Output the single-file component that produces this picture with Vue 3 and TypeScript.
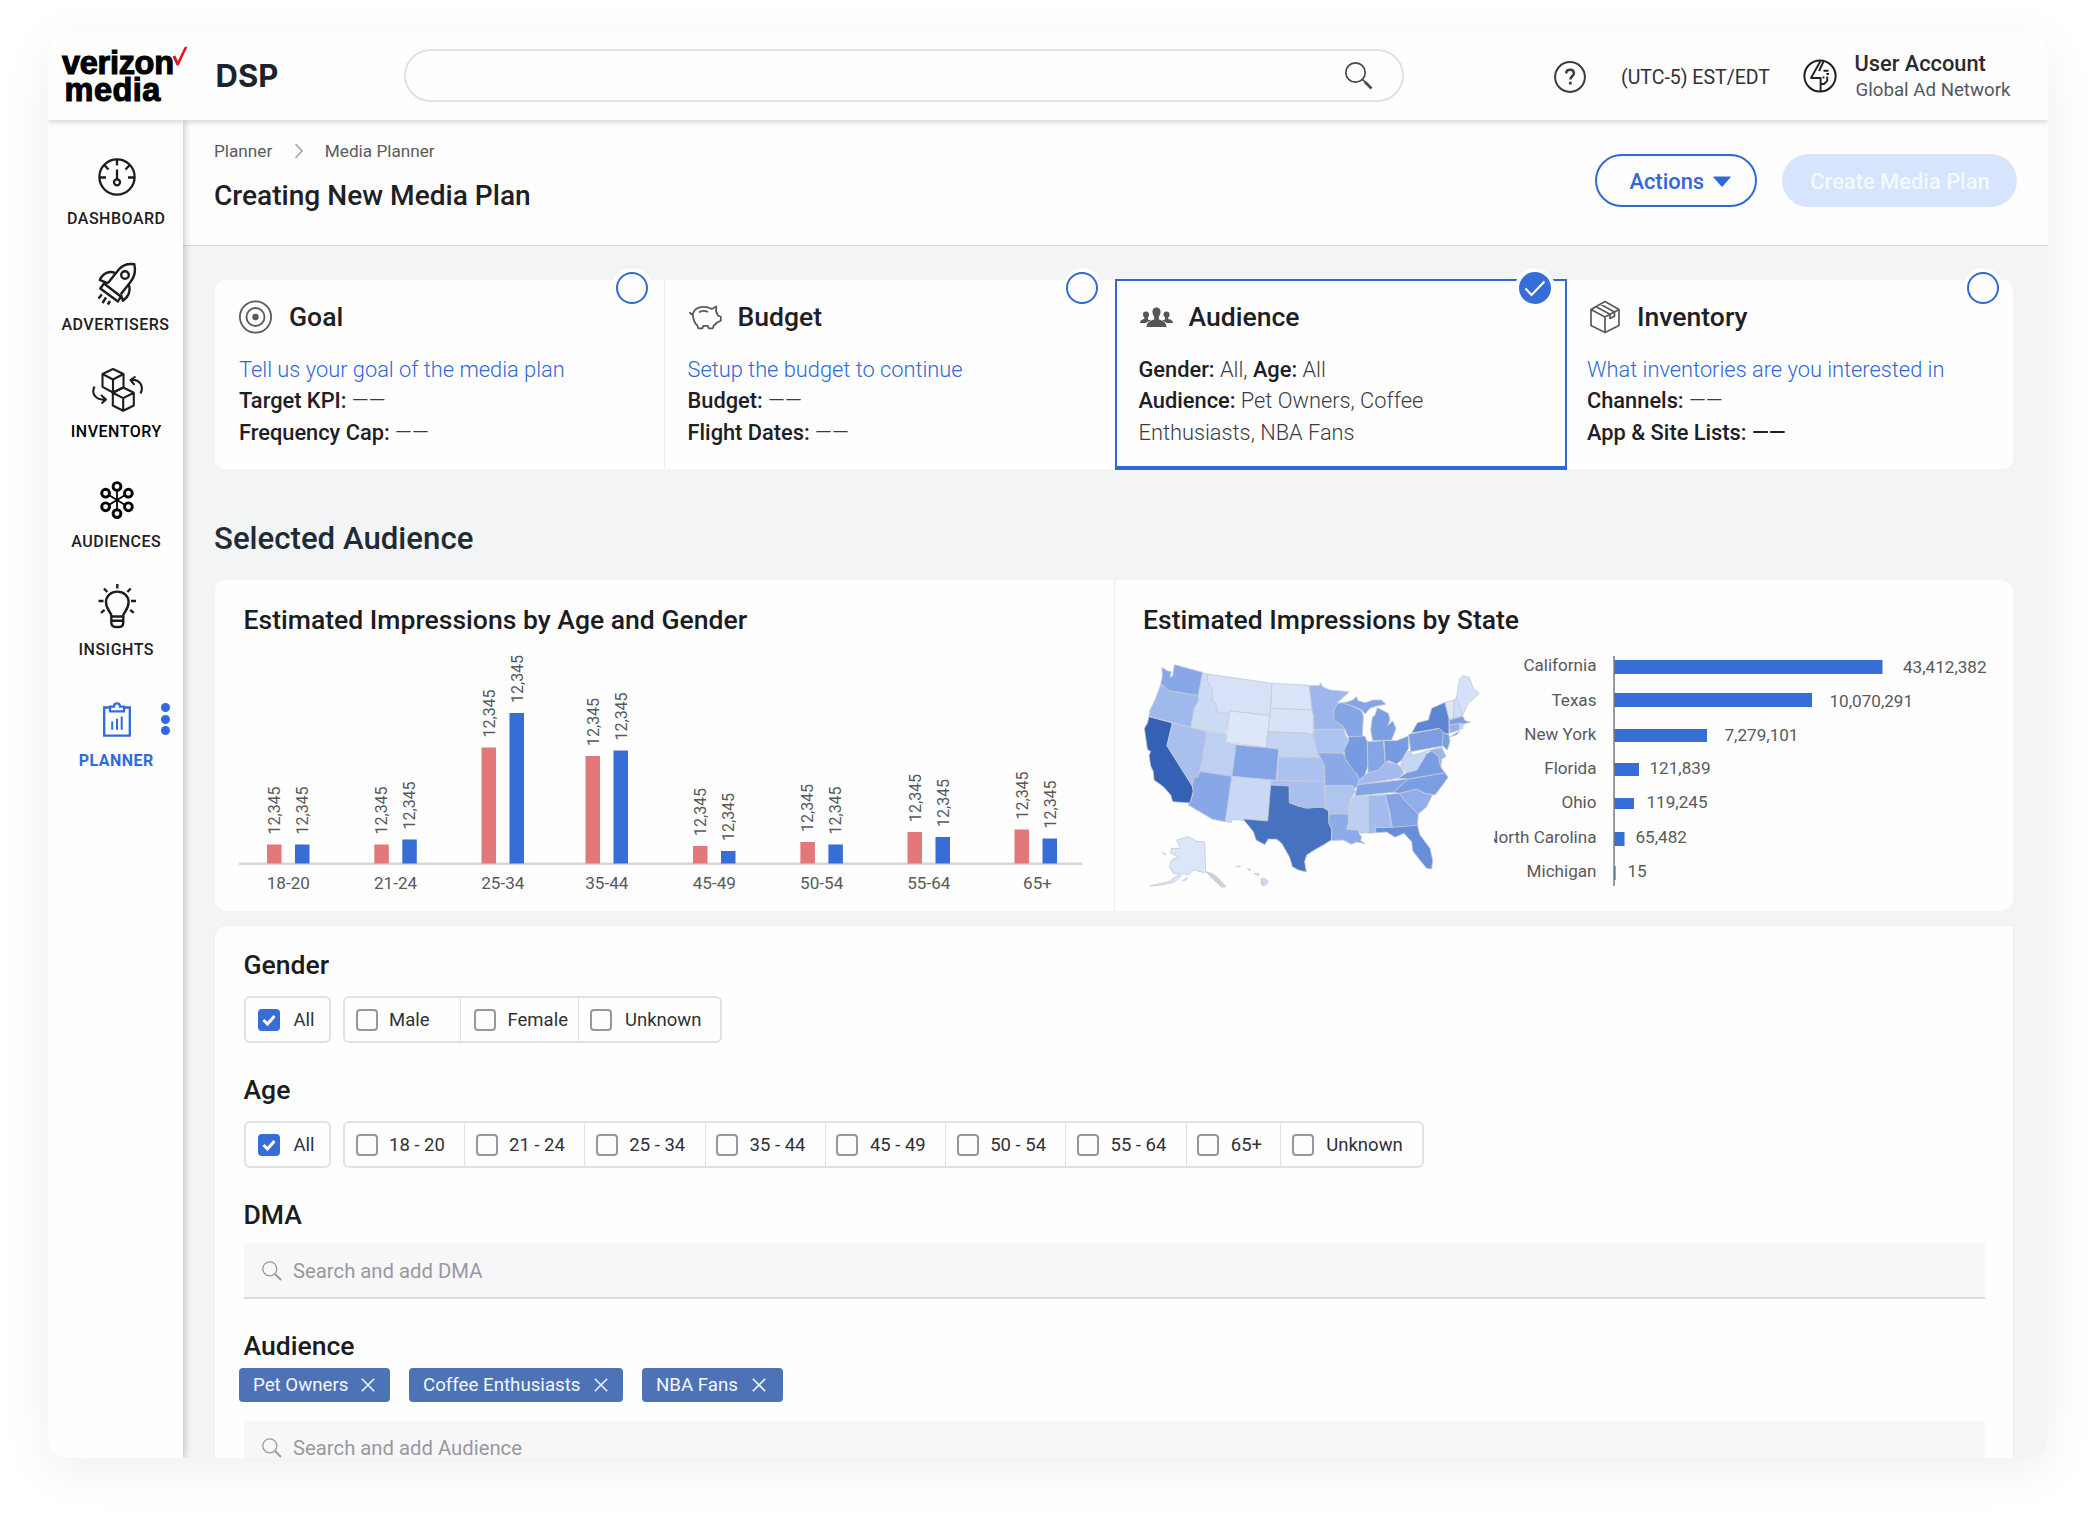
<script setup lang="ts">
interface AgeGroup { label: string; x: number; female: number; male: number }
interface StateRow { name: string; value: string; y: number; barY: number; barH: number; barW: number; valueX: number; valueY: number }
interface Region { id: string; fill: string; points: string }
interface Option { label: string; width: number; pad?: number; gap?: number }

const axisY = 220
const ageGroups: AgeGroup[] = [
  { label: '18-20', x: 28, female: 19.5, male: 19.5 },
  { label: '21-24', x: 135.3, female: 19.5, male: 24.5 },
  { label: '25-34', x: 242.5, female: 116.5, male: 151 },
  { label: '35-44', x: 346.5, female: 108, male: 113.5 },
  { label: '45-49', x: 454, female: 18, male: 13 },
  { label: '50-54', x: 561.4, female: 22, male: 19.5 },
  { label: '55-64', x: 668.5, female: 32, male: 27 },
  { label: '65+', x: 775.5, female: 34.5, male: 25.5 },
]

const stateRows: StateRow[] = [
  { name: 'California', value: '43,412,382', y: 31, barY: 20, barH: 14, barW: 268.5, valueX: 409, valueY: 32.7 },
  { name: 'Texas', value: '10,070,291', y: 65.5, barY: 53, barH: 14, barW: 198, valueX: 335.5, valueY: 67 },
  { name: 'New York', value: '7,279,101', y: 99.5, barY: 89, barH: 13, barW: 93, valueX: 230.5, valueY: 101 },
  { name: 'Florida', value: '121,839', y: 134, barY: 123, barH: 13, barW: 25, valueX: 155.5, valueY: 134 },
  { name: 'Ohio', value: '119,245', y: 168.3, barY: 158, barH: 11, barW: 20, valueX: 152.5, valueY: 168.3 },
  { name: 'North Carolina', value: '65,482', y: 202.7, barY: 192, barH: 14, barW: 10.5, valueX: 141.5, valueY: 202.7 },
  { name: 'Michigan', value: '15', y: 237, barY: 226, barH: 14, barW: 1.6, valueX: 133.5, valueY: 237 },
]

const regions: Region[] = [
  { id: 'WA', fill: '#87a7e8', points: '96,82 110,92 124,95 120,112 128,108 133,74 218,97 205,167 150,158 115,152 102,138 92,132 97,110' },
  { id: 'OR', fill: '#a0b9ed', points: '92,134 102,138 115,152 150,158 205,166 207,180 193,205 182,262 57,229 60,210 75,180' },
  { id: 'CA', fill: '#3461b6', points: '57,230 127,249 111,317 187,438 190,455 180,489 128,485 122,465 100,440 72,420 70,395 62,378 57,345 62,335 52,328 48,300 43,265 52,250' },
  { id: 'NV', fill: '#a8bff0', points: '127,249 231,275 210,394 203,412 192,412 187,438 111,317' },
  { id: 'ID', fill: '#ccdbf6', points: '218,98 233,102 232,122 248,155 245,182 255,188 265,218 298,220 285,282 182,262 193,205 207,180 205,166' },
  { id: 'MT', fill: '#d7e2f8', points: '233,102 426,130 420,226 300,213 298,220 265,218 255,188 245,182 248,155 232,122' },
  { id: 'WY', fill: '#dee7fa', points: '300,213 419,226 409,322 286,306' },
  { id: 'UT', fill: '#bdcff3', points: '231,275 289,285 286,309 318,314 306,409 210,394' },
  { id: 'CO', fill: '#83a4e6', points: '318,314 446,327 439,421 306,409' },
  { id: 'AZ', fill: '#87a7e8', points: '210,394 306,409 286,545 248,538 175,495 182,485 190,455 187,438 192,412 203,412' },
  { id: 'NM', fill: '#c8d8f5', points: '306,409 423,421 413,543 342,537 342,541 304,539 304,547 286,545' },
  { id: 'ND', fill: '#dbe5f9', points: '426,130 538,136 546,210 422,205' },
  { id: 'SD', fill: '#d8e3f8', points: '422,205 546,210 550,225 549,286 530,280 414,275' },
  { id: 'NE', fill: '#c3d4f5', points: '414,275 530,280 550,287 566,325 572,354 446,352 446,327 409,322' },
  { id: 'KS', fill: '#abc1ef', points: '446,352 572,354 582,370 583,425 441,420' },
  { id: 'OK', fill: '#a9c0ef', points: '423,421 583,425 586,505 560,502 530,505 500,497 478,488 477,438 422,435' },
  { id: 'TX', fill: '#4772c0', points: '422,435 477,438 478,488 500,497 530,505 560,502 580,503 596,512 597,550 606,570 604,600 580,615 550,632 530,645 524,665 529,696 505,690 487,680 478,650 455,610 440,598 415,597 404,614 378,600 370,575 342,541 342,537 413,543' },
  { id: 'MN', fill: '#9db7ec', points: '538,137 568,137 572,128 577,140 600,150 625,152 657,156 625,185 615,210 612,235 640,260 641,268 552,268 550,225 546,210' },
  { id: 'IA', fill: '#aec4f0', points: '552,268 641,268 648,288 656,300 645,320 640,340 563,338 555,310 549,286' },
  { id: 'MO', fill: '#8ba9e8', points: '563,338 640,340 650,365 670,385 685,412 690,425 682,437 672,448 668,437 585,437 583,375 572,354' },
  { id: 'AR', fill: '#afc5f0', points: '585,437 668,437 676,455 660,480 655,522 597,522 596,512 586,505' },
  { id: 'LA', fill: '#8dabe9', points: '597,522 655,522 657,545 650,568 686,570 688,582 695,590 692,602 706,611 680,606 665,613 640,600 604,602 606,570 597,550' },
  { id: 'WI', fill: '#86a5e6', points: '623,190 645,187 670,200 695,212 700,230 697,290 655,290 640,260 612,238 612,210' },
  { id: 'IL', fill: '#779be0', points: '655,290 704,288 712,305 714,375 705,405 688,420 682,405 665,385 645,355 642,330 656,302' },
  { id: 'UP', fill: '#84a4e5', points: '640,190 668,180 680,170 684,182 705,188 730,180 755,180 767,193 740,198 720,205 705,222 695,210 670,199' },
  { id: 'MI', fill: '#7c9fe3', points: '742,203 775,220 780,240 772,257 788,243 798,265 785,300 728,302 722,270 727,232 735,225' },
  { id: 'IN', fill: '#85a5e6', points: '712,305 760,302 766,370 745,390 714,398' },
  { id: 'OH', fill: '#779be1', points: '762,302 800,302 835,288 836,325 815,360 800,372 775,362 766,368' },
  { id: 'KY', fill: '#a2baed', points: '688,420 714,398 745,390 768,365 800,372 812,380 822,398 805,415 720,428 682,434' },
  { id: 'TN', fill: '#84a4e6', points: '682,434 835,417 790,457 675,468' },
  { id: 'MS', fill: '#bccef2', points: '668,470 715,467 716,578 692,580 686,570 650,568 657,540 655,500' },
  { id: 'AL', fill: '#a3bbed', points: '715,467 766,464 787,562 736,562 738,578 716,580' },
  { id: 'GA', fill: '#83a3e5', points: '766,464 808,460 825,482 865,522 862,560 787,562 780,520' },
  { id: 'FL', fill: '#668ed9', points: '736,563 787,562 862,556 870,585 900,625 908,660 905,687 890,685 865,655 848,632 845,605 822,580 795,592 770,576 738,578' },
  { id: 'SC', fill: '#91aeea', points: '808,460 860,447 885,460 907,465 890,500 865,522 825,482' },
  { id: 'NC', fill: '#7b9ee2', points: '835,417 945,398 954,412 940,432 915,465 885,460 860,447 808,460 790,457' },
  { id: 'VA', fill: '#7a9de1', points: '805,415 830,398 860,390 888,342 905,333 925,348 935,385 945,398 835,417' },
  { id: 'WV', fill: '#c6d6f5', points: '836,333 852,345 890,333 884,352 860,390 830,398 812,380 815,360' },
  { id: 'MD', fill: '#9db7ec', points: '890,333 935,322 948,350 936,356 932,382 925,348 905,333' },
  { id: 'PA', fill: '#7b9ee2', points: '836,283 928,265 942,280 938,318 842,335' },
  { id: 'NY', fill: '#5d86d2', points: '845,279 862,248 895,240 905,205 945,187 957,235 957,282 942,280 928,265' },
  { id: 'NJ', fill: '#7b9ee2', points: '940,278 957,285 960,305 952,330 936,316' },
  { id: 'LI', fill: '#4772c0', points: '960,290 990,273 980,284' },
  { id: 'VT', fill: '#dde7fa', points: '945,187 973,180 970,235 958,238' },
  { id: 'NH', fill: '#cfddf7', points: '973,180 980,172 998,225 970,235' },
  { id: 'ME', fill: '#d5e1f8', points: '980,172 988,118 998,107 1018,112 1030,145 1048,160 1015,190 998,225' },
  { id: 'MA', fill: '#7d9fe2', points: '958,240 998,228 1005,242 1022,246 1000,252 958,254' },
  { id: 'CT', fill: '#96b1ea', points: '958,254 990,250 988,270 960,279' },
  { id: 'RI', fill: '#c6d6f5', points: '990,250 1000,252 998,265 988,270' },
  { id: 'AK', fill: '#dbe6f9', points: '140,600 175,590 198,603 224,606 227,695 224,698 190,690 176,705 158,700 150,712 130,728 100,734 60,738 118,724 150,702 130,700 118,680 125,660 145,650 122,640 125,625 150,625' },
  { id: 'AK-coast', fill: '#ccd0d8', points: '227,695 245,700 262,712 288,740 275,742 240,708' },
  { id: 'HI', fill: '#c8d8f5', points: '393,718 402,713 416,725 402,739 393,732' },
  { id: 'HI-2', fill: '#cfddf7', points: '352,686 362,688 360,693' },
  { id: 'HI-3', fill: '#cfddf7', points: '372,700 388,702 384,707' },
  { id: 'HI-4', fill: '#cfddf7', points: '318,680 332,677 328,681' },
  { id: 'AK-2', fill: '#cfddf7', points: '98,637 108,643 104,645' },
  { id: 'AK-3', fill: '#cfddf7', points: '158,722 172,712 168,720' },
]

const genderOptions: Option[] = [
  { label: 'Male', width: 115, pad: 10.5 },
  { label: 'Female', width: 118, pad: 12.5, gap: 12 },
  { label: 'Unknown', width: 142, pad: 10.5, gap: 13.5 },
]
const ageOptions: Option[] = [
  { label: '18 - 20', width: 119 },
  { label: '21 - 24', width: 120.3 },
  { label: '25 - 34', width: 120.3 },
  { label: '35 - 44', width: 120.3 },
  { label: '45 - 49', width: 120.3 },
  { label: '50 - 54', width: 120.3 },
  { label: '55 - 64', width: 120.3 },
  { label: '65+', width: 94 },
  { label: 'Unknown', width: 142, pad: 11, gap: 12.5 },
]
const chips = [
  { label: 'Pet Owners', width: 151 },
  { label: 'Coffee Enthusiasts', width: 214 },
  { label: 'NBA Fans', width: 141 },
]
</script>

<template>
  <div class="stage">
    <div class="window">
      <header class="topbar">
        <div class="logo">
          <div class="wordmark"><span>verizon</span><span class="second-line">media</span></div>
          <svg class="tick" width="16" height="22" viewBox="0 0 16 22"><path d="M0.5 10.5 3.4 9.6 5.8 15 12.8 0.8 15.4 0.8 6.7 19.6 4.6 19.6Z" fill="#e8131b" /></svg>
        </div>
        <div class="product">DSP</div>
        <div class="search">
          <svg width="32" height="32" viewBox="0 0 32 32" fill="none" stroke="#47484b"><circle cx="12.5" cy="12.5" r="9.7" stroke-width="1.7" /><path d="M19.5 19.5l3 3" stroke-width="1.7" /><path d="M22 22l6.5 6.5" stroke-width="2.6" /></svg>
        </div>
        <svg class="help" width="34" height="34" viewBox="0 0 34 34" fill="none" stroke="#3b3c3f" stroke-width="2"><circle cx="17" cy="17" r="14.9" /><path d="M13.2 13.6c0-2.4 1.6-3.9 3.9-3.9s3.8 1.4 3.8 3.5c0 3-3.6 3.2-3.6 6.3" stroke-width="2.5" /><path d="M17.3 21.8v2.7" stroke-width="2.7" /></svg>
        <div class="timezone">(UTC-5) EST/EDT</div>
        <svg width="34" height="34" viewBox="0 0 34 34" fill="none" stroke="#1f2023" stroke-width="2" stroke-linejoin="round"><circle cx="17" cy="17" r="15.6" /><path d="M17.5 2 8 19H17.6V32.2M20.5 2.5 16 12M17.6 25h3.4l3.2-3.2v-4.3M20.5 11.7h5M23.5 15h2.5M20.500 17.500v2" stroke-width="1.900" /></svg>
        <div class="user"><strong>User Account</strong><span>Global Ad Network</span></div>
      </header>

      <div class="body">
        <nav class="sidebar">
          <a class="nav dashboard">
            <svg width="44" height="44" viewBox="0 0 44 44" fill="none" stroke="#1d1d20" stroke-width="2.3"><circle cx="22" cy="22" r="17.6" /><path d="M22 4.5v6M4.5 22.5H11M33 22.5h6.5M9.7 10.5l3.8 4M34.3 10.5l-3.8 4M22 14.5V24.5" /><circle cx="22" cy="27.3" r="3" /></svg>
            <span>DASHBOARD</span>
          </a>
          <a class="nav advertisers">
            <svg width="44" height="44" viewBox="0 0 44 44" fill="none" stroke="#1d1d20" stroke-width="2.4" stroke-linejoin="round"><path d="M13.8 22.3 25 8.3C29 3.8 34 2.4 40.3 3.3 42 10 40.5 16 36.5 21L26.8 33.3" /><path d="M21.5 12.2C15.5 9.2 9 12 5.8 18.8L13.8 22.3" /><path d="M10 22.5 26.8 35.5 24 40.5 6.3 27.5Z" /><path d="M34.8 23c2 6.5 0 12.5-5.8 16.8L26.8 33.5" /><circle cx="31" cy="14" r="3.8" /><path d="M7.8 33.5 4.5 37.5M12 36.5l-3.500 5.500M16 40l-2.200 3.500" /></svg>
            <span>ADVERTISERS</span>
          </a>
          <a class="nav inventory">
            <svg width="54" height="44" viewBox="0 0 54 44" fill="none" stroke="#1d1d20" stroke-width="2.1" stroke-linejoin="round"><path d="M23 1 12.5 6v12.8L23 24.5l10.5-5V6ZM12.5 6 23 11.5 33.5 6M23 11.5v13" /><path d="M33.2 19.5 22.8 24.8v12.7l10.4 5.3 10.6-5.3V24.8ZM22.8 24.8l10.4 5.3 10.6-5.3M33.2 30.1v12.5" /><path d="M4.500 18.500C.5 26.500 7 32.500 15.500 31.500M11 27l5 4.500-4.500 4M50.500 25.500C54.500 17.500 49 11 41 12M45.500 8.500 40.500 12l4 4.800" /></svg>
            <span>INVENTORY</span>
          </a>
          <a class="nav audiences">
            <svg width="44" height="44" viewBox="0 0 44 44" fill="none" stroke="#050505" stroke-width="2.900"><circle cx="22" cy="8.500" r="3.900" /><circle cx="22" cy="35.600" r="3.900" /><circle cx="10.600" cy="15.200" r="3.900" /><circle cx="33.400" cy="15.200" r="3.900" /><circle cx="10.600" cy="28.800" r="3.900" /><circle cx="33.400" cy="28.800" r="3.900" /><path d="M22 12v20M13.800 17l16.400 10M30.200 17 13.800 27" stroke-width="1.800" /></svg>
            <span>AUDIENCES</span>
          </a>
          <a class="nav insights">
            <svg width="44" height="44" viewBox="0 0 44 44" fill="none" stroke="#1d1d20" stroke-width="2.400"><path d="M16 33v-4.500c0-3-5.300-6-5.300-13.300C10.700 9 15.500 4.600 22 4.600S33.300 9 33.300 15.200C33.300 22.500 28 25.500 28 28.500V35c0 3.500-1.500 5-4 5h-4c-2.500 0-4-1.500-4-5Z" transform="translate(.3 1)" /><path d="M16.500 30.500h12M16.500 34.800h12" /><path d="M22.300-2v4.600M9 2.500l3.300 3.500M35.700 2.500 32.400 6M3.500 15h5M36 15h5M6 26.800l3.600-3M38.800 26.800l-3.600-3" /></svg>
            <span>INSIGHTS</span>
          </a>
          <a class="nav planner">
            <svg width="44" height="44" viewBox="0 0 44 44" fill="none" stroke="#2f6bdc" stroke-width="2.300"><path d="M15 9.500H9.200v28.200h25.600V9.500H29" /><path d="M15 13.300V8.600h4c0-4.200 6-4.200 6 0h4v4.700Z" /><path d="M17.200 23.500v8.300M22 20.700v11.100M26.700 18.500v13.300" stroke-width="2" /></svg>
            <span>PLANNER</span>
            <i class="more"><b></b><b></b><b></b></i>
          </a>
        </nav>

        <main class="main">
          <section class="pagehead">
            <div>
              <div class="crumbs"><span>Planner</span><svg width="10" height="18" viewBox="0 0 10 18" fill="none" stroke="#a2a3a6" stroke-width="1.600"><path d="M1.500 2 8 9l-6.500 7" /></svg><span>Media Planner</span></div>
              <h1>Creating New Media Plan</h1>
            </div>
            <div class="buttons">
              <button class="actions">Actions<svg width="18" height="11" viewBox="0 0 18 11"><path d="M1 .5h16q1 0 .4 1L10 10q-1 1-2 0L.6 1.500Q0 .5 1 .5Z" fill="#3068d6" /></svg></button>
              <button class="create">Create Media Plan</button>
            </div>
          </section>

          <section class="steps">
            <article class="step goal">
              <i class="dot"></i>
              <h2><svg width="34" height="34" viewBox="0 0 34 34" fill="none" stroke="#58595c" stroke-width="1.800"><circle cx="16.500" cy="17" r="15.600" /><circle cx="16.500" cy="17" r="9" /><circle cx="16.500" cy="17" r="3.200" fill="#58595c" stroke="none" /></svg>Goal</h2>
              <p class="prompt">Tell us your goal of the media plan</p>
              <p><b>Target KPI:</b> ——</p>
              <p><b>Frequency Cap:</b> ——</p>
            </article>
            <article class="step budget">
              <i class="dot"></i>
              <h2><svg width="34" height="34" viewBox="0 0 34 34" fill="none" stroke="#58595c" stroke-width="1.800" stroke-linejoin="round"><path d="M1.800 12C2.500 14.500 3.500 14.800 4.800 13.500 6.500 9 10.500 6.800 15.500 6.800c3 0 5.800.7 8.300 2.200L28.300 6.500l-.3 5 2 4 2.800 1.300v4l-3.800 1.700-3.500 3.500-.7 2.300h-4l-1-2.500h-4.500l-1 2.500H10.500L9.300 25.500C6.500 23 4.800 18.500 4.800 13.500" /><path d="M11 12.500c2-1.700 6-1.700 9-.6" /></svg>Budget</h2>
              <p class="prompt">Setup the budget to continue</p>
              <p><b>Budget:</b> ——</p>
              <p><b>Flight Dates:</b> ——</p>
            </article>
            <article class="step audience">
              <i class="dot done"><svg width="32" height="32" viewBox="0 0 32 32" fill="none" stroke="#fff" stroke-width="2"><path d="M6.500 16.500l6 6.500L25.500 9.500" /></svg></i>
              <h2><svg width="34" height="34" viewBox="0 0 34 34" fill="#55565a"><path d="M17.500 7.500c3 0 4.300 2.200 4 5-.2 2.200-1.200 3.500-1.700 4.300v2.500c2.300 1.200 7.700 2.500 7.700 7.700H7.500c0-5.200 5.400-6.500 7.700-7.700v-2.500c-.5-.8-1.500-2.100-1.700-4.300-.3-2.800 1-5 4-5Z" /><path d="M7 11.500c2.400 0 3.200 1.700 3 3.500-.2 1.500-.8 2-1 2.500v2l3 1.200c-2.500.8-4.200 1-5 2.300H1c0-3.300 3-3.500 4.300-4v-1.500C5 17 4.200 16.500 4 15c-.2-1.800.6-3.500 3-3.500ZM27.500 11.500c2.400 0 3.200 1.700 3 3.500-.2 1.500-1 2-1.300 2.500V19c1.300.5 4.800.7 4.800 4h-6.500c-.7-1.300-2.200-1.600-4.500-2.300l3-1.200v-2c-.3-.5-1.300-1-1.500-2.500-.2-1.800.6-3.500 3-3.500Z" /></svg>Audience</h2>
              <p><b>Gender:</b> All, <b>Age:</b> All</p>
              <p><b>Audience:</b> Pet Owners, Coffee</p>
              <p>Enthusiasts, NBA Fans</p>
            </article>
            <article class="step stock">
              <i class="dot"></i>
              <h2><svg width="34" height="34" viewBox="0 0 34 34" fill="none" stroke="#58595c" stroke-width="1.700" stroke-linejoin="round"><path d="M18 1.500 4 9.500v16l14 7 14-7v-16ZM4 9.500l14 7.500 14-7.500M18 17v15.500M9 6.800l14 7.500v4.200l4.500-2.300V12L13.500 4.200" /></svg>Inventory</h2>
              <p class="prompt">What inventories are you interested in</p>
              <p><b>Channels:</b> ——</p>
              <p><b>App &amp; Site Lists: ——</b></p>
            </article>
          </section>

          <h2 class="section-title">Selected Audience</h2>

          <section class="charts">
            <div class="panel by-age">
              <h3>Estimated Impressions by Age and Gender</h3>
              <svg class="age-chart" width="860" height="256" viewBox="0 0 860 256">
                <rect x="0" :y="axisY - 1.500" width="843" height="2.500" fill="#d5d5d8" />
                <g v-for="g in ageGroups" :key="g.label">
                  <rect :x="g.x" :y="axisY - g.female" width="14.500" :height="g.female - .5" fill="#e2787a" />
                  <rect :x="g.x + 28" :y="axisY - g.male" width="14.500" :height="g.male - .5" fill="#376dd7" />
                  <text :transform="`translate(${g.x + 13} ${axisY - g.female - 10}) rotate(-90)`" class="val">12,345</text>
                  <text :transform="`translate(${g.x + 41} ${axisY - g.male - 10}) rotate(-90)`" class="val">12,345</text>
                  <text :x="g.x + (g.label === '65+' ? 23 : 21.300)" y="245" text-anchor="middle" class="cat">{{ g.label }}</text>
                </g>
              </svg>
            </div>
            <div class="panel by-state">
              <h3>Estimated Impressions by State</h3>
              <div class="state-row">
                <svg width="363.500" height="260" viewBox="0 0 1090.500 780">
                  <g stroke="#c5cad6" stroke-width="2.500" stroke-linejoin="round">
                    <polygon v-for="r in regions" :key="r.id" :points="r.points" :fill="r.fill" />
                  </g>
                </svg>
                <svg width="510" height="260" viewBox="0 0 510 260">
                  <g v-for="s in stateRows" :key="s.name">
                    <text x="102.500" :y="s.y" text-anchor="end" class="cat">{{ s.name }}</text>
                    <rect x="120" :y="s.barY" :width="s.barW" :height="s.barH" fill="#376dd7" />
                    <text :x="s.valueX" :y="s.valueY" class="cat">{{ s.value }}</text>
                  </g>
                  <rect x="119.300" y="16" width="1.500" height="230" fill="#77797d" />
                </svg>
              </div>
            </div>
          </section>

          <section class="filters">
            <h3>Gender</h3>
            <div class="options">
              <div class="group all"><label><i class="box on"><svg width="22" height="22" viewBox="0 0 22 22" fill="none" stroke="#fff" stroke-width="3"><path d="M5.500 11l4 4 7-8" /></svg></i>All</label></div>
              <div class="group"><label v-for="o in genderOptions" :key="o.label" :style="{ width: o.width + 'px', paddingLeft: (o.pad ?? 10.500) + 'px', gap: (o.gap ?? 11.500) + 'px' }"><i class="box"></i>{{ o.label }}</label></div>
            </div>
            <h3>Age</h3>
            <div class="options">
              <div class="group all"><label><i class="box on"><svg width="22" height="22" viewBox="0 0 22 22" fill="none" stroke="#fff" stroke-width="3"><path d="M5.500 11l4 4 7-8" /></svg></i>All</label></div>
              <div class="group"><label v-for="o in ageOptions" :key="o.label" :style="{ width: o.width + 'px', paddingLeft: (o.pad ?? 10.500) + 'px', gap: (o.gap ?? 11.500) + 'px' }"><i class="box"></i>{{ o.label }}</label></div>
            </div>
            <h3>DMA</h3>
            <div class="field"><svg width="22" height="22" viewBox="0 0 22 22" fill="none" stroke="#9a9b9e" stroke-width="1.300"><circle cx="8.800" cy="8.800" r="7" /><path d="M14 14l6 6" stroke-width="2" /></svg>Search and add DMA</div>
            <h3>Audience</h3>
            <div class="chips">
              <span v-for="c in chips" :key="c.label" class="chip" :style="{ width: c.width + 'px' }">{{ c.label }}<svg width="14" height="14" viewBox="0 0 14 14" fill="none" stroke="#eef2fa" stroke-width="1.600"><path d="M.8.8l12.400 12.400M13.200.8.8 13.200" /></svg></span>
            </div>
            <div class="field second"><svg width="22" height="22" viewBox="0 0 22 22" fill="none" stroke="#9a9b9e" stroke-width="1.300"><circle cx="8.800" cy="8.800" r="7" /><path d="M14 14l6 6" stroke-width="2" /></svg>Search and add Audience</div>
          </section>
        </main>
      </div>
    </div>
  </div>
</template>

<style>
body { background: #fff; }
</style>

<style scoped>
* { box-sizing: border-box; }
.stage { width: 2096px; height: 1522px; padding: 32px 48px 64px; overflow: hidden; background: #fff; font-family: Roboto, "Liberation Sans", sans-serif; color: #1f2023; white-space: nowrap; }
.window { width: 2000px; height: 1426px; border-radius: 20px; overflow: hidden; background: #fefefe; display: flex; flex-direction: column; box-shadow: 0 12px 50px rgba(0, 0, 0, .068); }
h1, h2, h3, p { margin: 0; font-weight: 500; }
svg { display: block; flex: none; }

.topbar { flex: none; height: 87.500px; display: flex; align-items: center; background: #fefefe; position: relative; z-index: 3; box-shadow: 0 2px 6px rgba(40, 45, 55, .2); }
.logo { width: 167.500px; height: 100%; padding-left: 14px; display: flex; }
.wordmark { display: flex; flex-direction: column; width: 110px; padding-top: 18px; font: 700 32.500px/27px "Liberation Sans", Arial, sans-serif; letter-spacing: -.3px; color: #000; -webkit-text-stroke: 1.100px #000; }
.second-line { padding-left: 2.500px; letter-spacing: .5px; }
.tick { margin-top: 13.500px; }
.product { width: 188.500px; font: 700 31px/36px Inter, sans-serif; color: #1d232c; }
.search { width: 1000px; height: 53px; border: 2px solid #dfe2e2; border-radius: 27px; display: flex; align-items: center; justify-content: flex-end; padding-right: 27px; }
.help { margin: 2px 0 0 148.500px; }
.timezone { margin-left: 34.500px; width: 181.500px; font-size: 19.500px; padding-top: 3px; color: #303134; }
.user { margin-left: 18px; padding-top: 3px; display: flex; flex-direction: column; }
.user strong { font-weight: 500; font-size: 21.800px; line-height: 27px; color: #2a2b2e; }
.user span { font-size: 18.700px; line-height: 27.500px; padding-left: 1px; color: #56575a; }

.body { flex: 1; min-height: 0; display: flex; }
.sidebar { width: 135px; flex: none; padding-top: 35px; display: flex; flex-direction: column; align-items: center; position: relative; z-index: 2; background: #fefefe; box-shadow: 1px 0 7px rgba(40, 45, 55, .3); }
.nav { display: flex; flex-direction: column; align-items: center; gap: 10px; width: 100%; padding-left: 1.500px; font-size: 16px; line-height: 20px; font-weight: 500; letter-spacing: .5px; position: relative; }
.nav svg { overflow: visible; position: relative; left: .5px; }
.nav.advertisers { margin-top: 32.500px; padding-left: 0; }
.inventory { margin-top: 33px; }
.audiences { margin-top: 35.500px; }
.insights { margin-top: 34.500px; }
.nav.planner { margin-top: 37.500px; gap: 9px; color: #2f6bdc; font-weight: 700; }
.inventory { color: #000; }
.more { position: absolute; left: 112.500px; top: 5.500px; display: flex; flex-direction: column; gap: 2.500px; }
.more b { width: 9px; height: 9px; border-radius: 50%; background: #2f6bdc; }

.main { flex: 1; min-width: 0; background: #f3f4f6; overflow: hidden; display: flex; flex-direction: column; }
.pagehead { flex: none; height: 126.500px; background: #fefefe; border-bottom: 1.500px solid #d3d5d8; padding: 21px 31px 0 31px; display: flex; justify-content: space-between; }
.crumbs { display: flex; align-items: center; font-size: 17.200px; line-height: 20px; color: #5a5b5e; }
.crumbs svg { margin: 0 20.500px 0 22px; }
h1 { margin-top: 17px; font-size: 28.100px; line-height: 36px; }
.buttons { display: flex; gap: 25px; padding-top: 13.500px; }
button { height: 53px; border-radius: 27px; font: 500 21.900px/1 Roboto, sans-serif; display: flex; align-items: center; justify-content: center; padding: 2px 0 0; }
.actions { width: 162.500px; gap: 9px; border: 2px solid #3068d6; background: #fefefe; color: #3068d6; padding-left: 9px; }
.create { width: 235px; border: 0; background: #d7e4fe; color: #f5f8ff; padding-left: 1px; }

.steps { flex: none; margin: 34px 35px 0 32px; height: 189px; display: grid; grid-template-columns: 450px 449.500px 452px 446.500px; }
.step { position: relative; background: #fefefe; padding: 19px 0 0 24px; font-size: 21.820px; color: #3a3b3e; }
.step p { font-weight: 300; line-height: 31.200px; }
.step b { font-weight: 500; color: #1f2023; }
.step .prompt { color: #3068d6; }
.step h2 { display: flex; align-items: center; gap: 16px; font-size: 26.550px; line-height: 36px; color: #1f2023; margin-bottom: 19.200px; }
.goal { border-right: 1.500px solid #ececef; border-radius: 10px 0 0 10px; }
.budget { padding-left: 22.500px; }
.audience { border: 2px solid #3068d6; border-bottom-width: 4px; margin: -1px 0; padding: 18px 0 0 22px; }
.stock { padding-left: 20.500px; border-radius: 0 10px 10px 0; }
.dot { position: absolute; right: 16.500px; top: -8px; width: 32px; height: 32px; border: 2px solid #3068d6; border-radius: 50%; background: #fefefe; box-shadow: 0 0 0 4px #fefefe; }
.budget .dot { right: 17px; }
.audience .dot { right: 14px; top: -9px; }
.stock .dot { right: 14px; }
.dot.done { background: #376dd7; border: 0; }

.section-title { flex: none; margin: 49.500px 0 21.500px 31px; font-size: 31.200px; line-height: 40px; color: #212b33; }
.charts { flex: none; margin: 0 35px 0 32px; height: 330.500px; border-radius: 12px; background: #fefefe; display: flex; overflow: hidden; }
.panel { padding-top: 22px; }
.by-age { width: 900px; padding-left: 28.500px; border-right: 1.500px solid #ececef; }
.by-state { flex: 1; padding-left: 28px; }
h3 { font-size: 26.550px; line-height: 36px; color: #1b1c1f; }
.age-chart { margin: 6px 0 0 -5px; }
.state-row { margin: 2px 0 0 -13px; display: flex; }
.val { font-size: 16px; fill: #58595c; }
.cat { font-size: 17.100px; fill: #58595c; }

.filters { flex: none; margin: 14px 34px 0 31px; height: 700px; padding: 21.500px 28px 0 28.500px; background: #fefefe; border: 1px solid #eceef0; border-radius: 12px 0 0 0; }
.options { display: flex; gap: 12.500px; margin: 13.300px 0 29.200px; }
.group { height: 46.500px; display: flex; border: 2px solid #dfe2e2; border-radius: 6px; }
.group label { display: flex; align-items: center; font-size: 18.500px; color: #303134; border-left: 1.500px solid #dfe2e2; }
.group label:first-child { border-left: 0; }
.all { width: 87px; }
.all label { padding-left: 12px; gap: 14px; }
.box { width: 22px; height: 22px; flex: none; border: 2.500px solid #97989b; border-radius: 4px; }
.box.on { border: 0; background: #376dd7; }
.field { margin: 10.500px 0 28.500px; height: 56px; padding: 1px 0 0 17.500px; display: flex; align-items: center; gap: 10px; background: #f7f7fa; border-bottom: 2px solid #d9dbdc; font-size: 20.300px; color: #98999c; }
.chips { display: flex; gap: 19px; margin: 4px 0 0 -4.500px; }
.chip { height: 34.300px; padding: 0 15px 0 14px; display: flex; align-items: center; justify-content: space-between; border-radius: 4px; background: #4d72b5; color: #f4f7fc; font-size: 18.700px; }
.chip:last-child { padding-right: 17px; }
.field.second { margin-top: 18.700px; }
</style>
